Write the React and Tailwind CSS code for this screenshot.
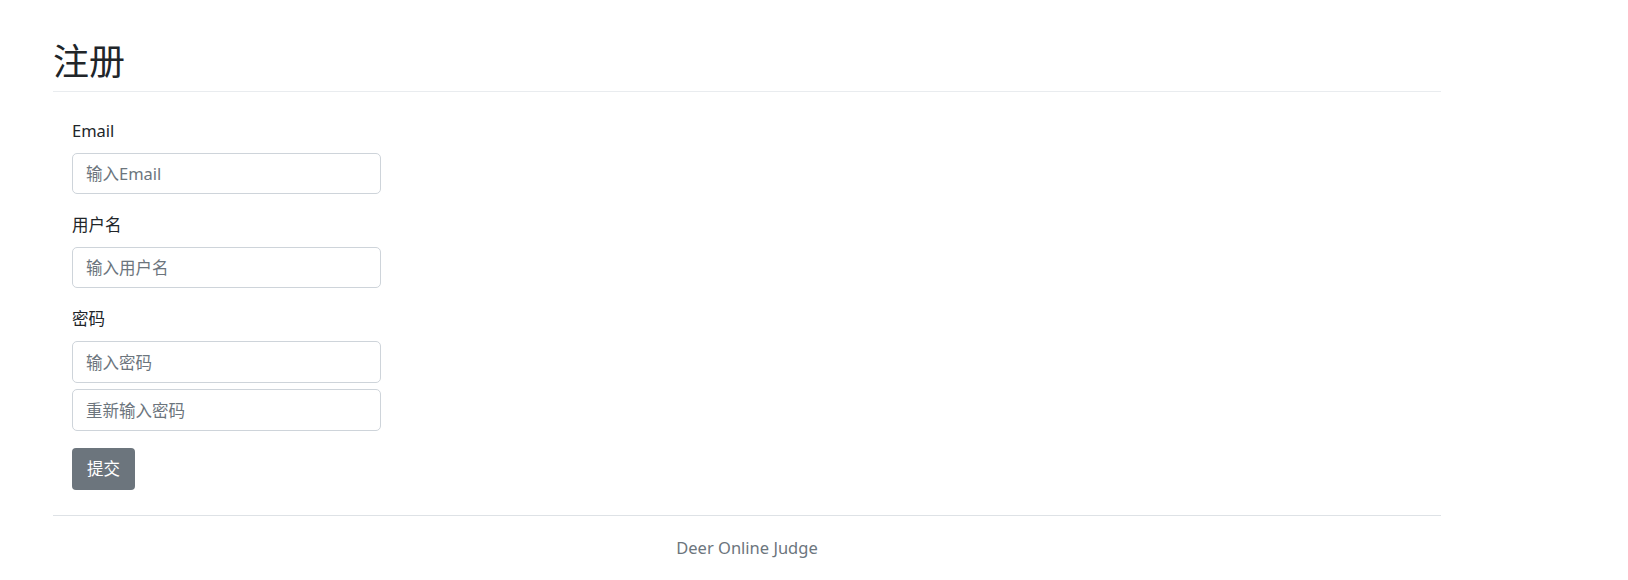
import React from 'react';

const font = { fontFamily: '"Noto Sans", "Noto Sans CJK SC", sans-serif' };

function Field({ label, placeholder }) {
  return (
    <div className="mb-[19px]">
      <label className="block text-[16.5px] leading-[24px] mb-[10px] text-[#212529]">{label}</label>
      <input
        type="text"
        placeholder={placeholder}
        className="block w-[309px] h-[41px] px-[13px] text-[16.5px] border border-[#ced4da] rounded-[5px] placeholder:text-[#6c757d] outline-none"
      />
    </div>
  );
}

export default function App() {
  return (
    <div className="bg-white min-h-[580px] text-[#212529]" style={font}>
      <div className="ml-[53px] w-[1388px]">
        {/* Title */}
        <h1 className="pt-[39px] pb-[7px] text-[36px] leading-[45px] font-normal border-b border-[#e9ecef]">注册</h1>

        {/* Form */}
        <form className="pl-[19px] pt-[27px]">
          <Field label="Email" placeholder="输入Email" />
          <Field label="用户名" placeholder="输入用户名" />
          <div>
            <label className="block text-[16.5px] leading-[24px] mb-[10px]">密码</label>
            <input
              type="password"
              placeholder="输入密码"
              className="block w-[309px] h-[42px] px-[13px] text-[16.5px] border border-[#ced4da] rounded-[5px] placeholder:text-[#6c757d] outline-none"
            />
            <input
              type="password"
              placeholder="重新输入密码"
              className="block mt-[6px] w-[309px] h-[42px] px-[13px] text-[16.5px] border border-[#ced4da] rounded-[5px] placeholder:text-[#6c757d] outline-none"
            />
          </div>
          <button
            type="button"
            className="mt-[17px] w-[63px] h-[42px] bg-[#6c757d] text-white text-[16.5px] rounded-[4px]"
          >
            提交
          </button>
        </form>

        {/* Footer */}
        <div className="mt-[25px] border-t border-[#dee2e6]">
          <p className="pt-[20px] text-center text-[16.5px] leading-[24px] text-[#6c757d]">Deer Online Judge</p>
        </div>
      </div>
    </div>
  );
}
